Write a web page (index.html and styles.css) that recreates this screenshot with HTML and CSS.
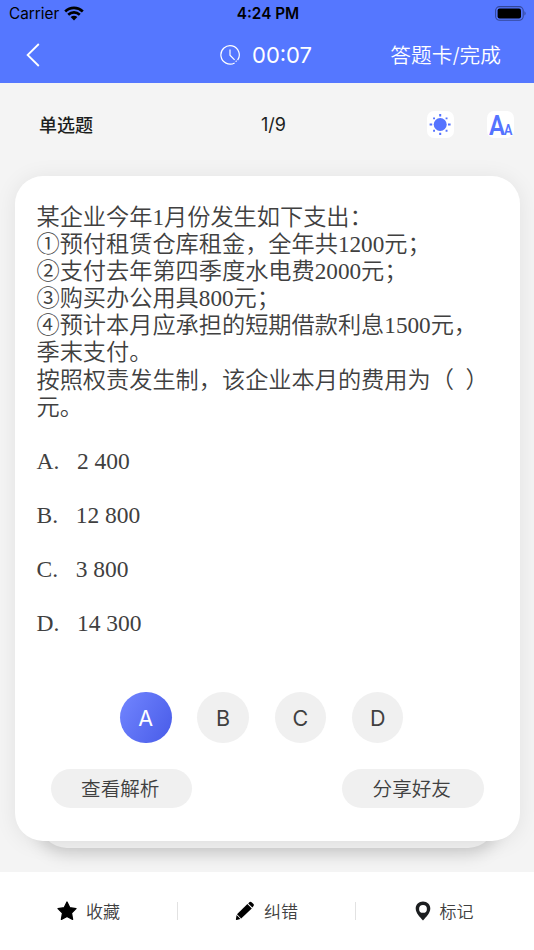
FILE: index.html
```html
<!DOCTYPE html>
<html lang="zh-CN">

<head>
    <meta charset="UTF-8">
    <title>单选题</title>
    <link rel="stylesheet" href="styles.css">
</head>

<body>
    <header>
        <div class="status">
            <div class="carrier">
                <span>Carrier</span>
                <svg width="20" height="15" viewBox="0 0 20 15">
                    <g fill="none" stroke="#000" stroke-width="2.7">
                        <path d="M1.2 5.4C6.2 .7 13.8 .7 18.8 5.4" />
                        <path d="M4.2 8.7C7.6 5.6 12.4 5.6 15.8 8.7" />
                    </g>
                    <path d="M6.6 11.1Q10 8.2 13.4 11.1L10 14.4Z" />
                </svg>
            </div>
            <span class="time">4:24 PM</span>
            <svg class="battery" width="32" height="15" viewBox="0 0 32 15">
                <rect x=".6" y=".6" width="27.6" height="13.6" rx="4" fill="none" stroke="#000" stroke-opacity=".4" stroke-width="1.1" />
                <rect x="2.6" y="2.4" width="23.4" height="10" rx="2" />
                <path d="M29.5 5Q31.6 7.4 29.5 9.8Z" opacity=".45" />
            </svg>
        </div>
        <nav>
            <svg class="back" width="14" height="24" viewBox="0 0 14 24" fill="none" stroke="#fff" stroke-width="1.8">
                <path d="M12.8 1L1.6 12L12.8 23" />
            </svg>
            <div class="timer">
                <svg width="20" height="20" viewBox="0 0 20 20" fill="none" stroke="#fff" stroke-width="1.2">
                    <path d="M14.6 17.9A9.2 9.2 0 1 1 17.6 15.2" />
                    <path d="M10 4.5V10.2L14.6 14.8" />
                    <path d="M15.6 16.6L16.6 15.8" />
                </svg>
                <span>00:07</span>
            </div>
            <span class="finish">答题卡/完成</span>
        </nav>
    </header>

    <main>
        <div class="toolbar">
            <span class="type">单选题</span>
            <span class="count">1/9</span>
            <div class="tools">
                <div class="tool">
                    <svg width="27" height="27" viewBox="0 0 27 27" fill="#5573ff">
                        <circle cx="13.2" cy="13.5" r="6.5" />
                        <path d="M12.2 3h2v2.4h-2zM12.2 21.7h2v2.4h-2zM2.6 12.5h2.6v2h-2.6zM21 12.5h2.6v2h-2.6z" />
                        <path d="M6.1 6.4h1.9v1.9h-1.9zM18.6 6.4h1.9v1.9h-1.9zM6.1 18.8h1.9v1.9h-1.9zM18.6 18.8h1.9v1.9h-1.9z" />
                    </svg>
                </div>
                <div class="tool letters"><span class="big">A</span><span class="small">A</span></div>
            </div>
        </div>

        <div class="stack">
            <section class="card">
                <div class="question">
                    <p>某企业今年1月份发生如下支出：</p>
                    <p>①预付租赁仓库租金，全年共1200元；</p>
                    <p>②支付去年第四季度水电费2000元；</p>
                    <p>③购买办公用具800元；</p>
                    <p>④预计本月应承担的短期借款利息1500元，</p>
                    <p>季末支付。</p>
                    <p>按照权责发生制，该企业本月的费用为（&nbsp;&nbsp;）</p>
                    <p>元。</p>
                </div>
                <div class="options">
                    <p>A.&nbsp;&nbsp;&nbsp;2 400</p>
                    <p>B.&nbsp;&nbsp;&nbsp;12 800</p>
                    <p>C.&nbsp;&nbsp;&nbsp;3 800</p>
                    <p>D.&nbsp;&nbsp;&nbsp;14 300</p>
                </div>
                <div class="choices">
                    <button class="active">A</button>
                    <button>B</button>
                    <button>C</button>
                    <button>D</button>
                </div>
                <div class="actions">
                    <button>查看解析</button>
                    <button>分享好友</button>
                </div>
            </section>
        </div>
    </main>

    <footer>
        <div class="tab">
            <svg width="20" height="20" viewBox="0 0 20 20">
                <path d="M10 1L12.8 6.7L19 7.6L14.5 12L15.6 18.4L10 15.4L4.4 18.4L5.5 12L1 7.6L7.2 6.7Z" stroke="#000" stroke-width="1.3" stroke-linejoin="round" />
            </svg>
            <span>收藏</span>
        </div>
        <div class="tab">
            <svg width="20" height="20" viewBox="0 0 20 20">
                <path d="M12.4 3L16.8 7.4L6.2 17.4L2 13.2Z" />
                <path d="M13.2 2.4L14.6 1.1Q15.6 .3 16.6 1.2L18.5 3.1Q19.4 4.1 18.5 5.1L17.4 6.4Z" />
                <path d="M1.6 14L5.5 17.9L1.6 18.9Q.8 19 .9 18.2Z" />
            </svg>
            <span>纠错</span>
        </div>
        <div class="tab">
            <svg width="16" height="20" viewBox="2 0 16 20" fill="#1c1e20">
                <path fill-rule="evenodd" d="M10 .5C5.8 .5 2.7 3.5 2.7 7.6C2.7 12.2 7 16.3 10 19.5C13 16.3 17.3 12.2 17.3 7.6C17.3 3.5 14.2 .5 10 .5ZM10 4A3.9 3.9 0 1 1 10 11.8A3.9 3.9 0 1 1 10 4Z" />
            </svg>
            <span>标记</span>
        </div>
    </footer>
</body>

</html>
```
FILE: styles.css
```css
* {
    box-sizing: border-box;
}

body {
    margin: 0;
    height: 950px;
    display: flex;
    flex-direction: column;
    font-family: Inter, "Noto Sans CJK SC", sans-serif;
    background-color: #fff;
    color: #404040;
    overflow: hidden;
}

svg {
    display: block;
}

p {
    margin: 0;
}

button {
    border: none;
    padding: 0;
    font-family: inherit;
    color: #404040;
    background-color: #f0f0f0;
}

header {
    height: 83px;
    background-color: #5577ff;
    color: #fff;
}

.status {
    height: 27px;
    padding: 0 7px 0 9px;
    display: grid;
    grid-template-columns: 1fr auto 1fr;
    align-items: center;
    color: #000;
    font-size: 15.3px;
}

.carrier {
    display: flex;
    align-items: center;
    gap: 5px;
}

.time {
    font-weight: 600;
}

.battery {
    justify-self: end;
}

nav {
    height: 55px;
    padding: 0 33px 0 26px;
    display: grid;
    grid-template-columns: 194px 1fr auto;
    align-items: center;
    font-size: 20.7px;
}

.timer {
    display: flex;
    align-items: center;
    gap: 12px;
    font-size: 22px;
}

.finish {
    font-weight: 350;
    padding-bottom: 2px;
}

main {
    height: 789px;
    background-color: #f4f4f4;
    overflow: hidden;
}

.toolbar {
    height: 93px;
    padding: 0 20px 10px 39px;
    display: grid;
    grid-template-columns: 222px 1fr auto;
    align-items: center;
    font-size: 18px;
    color: #1c1e20;
}

.type {
    font-weight: 500;
    padding-bottom: 1px;
}

.count {
    font-size: 18px;
}

.tools {
    display: flex;
    gap: 33px;
}

.tool {
    width: 27px;
    height: 27px;
    border-radius: 7px;
    background-color: #fff;
}

.letters {
    display: flex;
    align-items: baseline;
    padding-left: 2px;
    color: #5573ff;
    font-family: Roboto, sans-serif;
    font-weight: 600;
    line-height: 29px;
}

.big {
    font-size: 27.5px;
    transform: scaleX(0.87);
    transform-origin: left;
}

.small {
    font-size: 14.5px;
    margin-left: -3px;
    transform: scaleX(0.87);
    transform-origin: left;
}

.stack {
    position: relative;
    z-index: 0;
    margin: 0 14.5px;
    height: 672px;
}

/* second sheet under the card */
.stack::after {
    content: "";
    position: absolute;
    z-index: -1;
    left: 24px;
    right: 24px;
    bottom: 0;
    height: 200px;
    border-radius: 28px;
    background-color: #f0f0f0;
    box-shadow: 0 5px 18px rgba(0, 0, 0, 0.18);
}

.card {
    height: 665px;
    padding: 28px 22px 0;
    border-radius: 28px;
    background-color: #fff;
    box-shadow: 0 2px 22px rgba(0, 0, 0, 0.08);
}

.question,
.options {
    font-family: "Liberation Serif", "Noto Sans CJK SC", serif;
    font-size: 23.2px;
    font-weight: 350;
    line-height: 27.1px;
    white-space: nowrap;
}

.options {
    padding-top: 27px;
    display: grid;
    gap: 27px;
    font-size: 23.5px;
}

.choices {
    padding: 54.5px 94px 0 83.5px;
    display: flex;
    justify-content: space-between;
}

.choices button {
    width: 51.5px;
    height: 51.5px;
    padding-top: 1px;
    border-radius: 50%;
    font-size: 21.5px;
}

.choices .active {
    color: #fff;
    background: linear-gradient(120deg, #7286ff, #485be8);
}

.actions {
    padding: 26px 14px 0;
    display: flex;
    justify-content: space-between;
}

.actions button {
    width: 141.5px;
    height: 38.5px;
    padding: 0 2px 1px 0;
    border-radius: 20px;
    font-size: 19.6px;
    font-weight: 350;
}

footer {
    height: 78px;
    display: grid;
    grid-template-columns: repeat(3, 1fr);
    align-items: center;
}

.tab {
    height: 18px;
    display: flex;
    align-items: center;
    justify-content: center;
    gap: 9px;
    font-size: 17px;
    font-weight: 350;
    border-right: 1px solid #e2e2e2;
}

.tab span {
    padding-bottom: 2px;
}

.tab:last-child {
    border-right: none;
    padding-right: 2px;
}
```
